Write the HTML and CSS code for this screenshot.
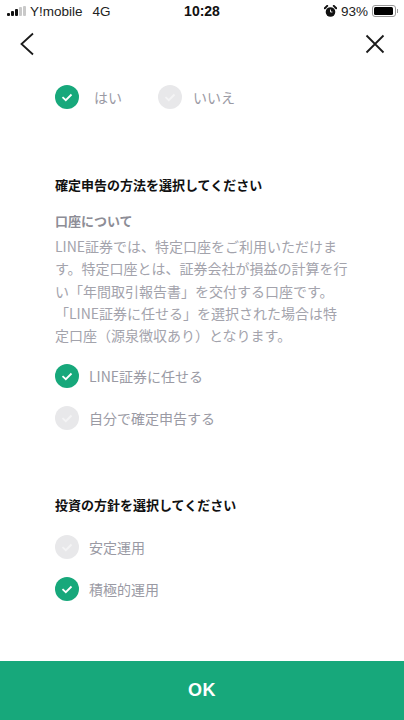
FILE: index.html
```html
<!DOCTYPE html>
<html lang="ja">
<head>
<meta charset="UTF-8" />
<meta name="viewport" content="width=device-width, initial-scale=1" />
<title>確定申告の方法</title>
<link rel="stylesheet" href="styles.css">
</head>
<body>

<div class="status-bar">
  <div class="status-left">
    <span class="signal">
      <i class="on s1"></i><i class="on s2"></i><i class="on s3"></i><i class="s4"></i><i class="s5"></i>
    </span>
    <span>Y!mobile</span>
    <span class="network">4G</span>
  </div>
  <div class="status-time">10:28</div>
  <div class="status-right">
    <svg class="alarm" width="13" height="13" viewBox="0 0 13 13">
      <circle cx="6.5" cy="7" r="4.8" fill="#111"/>
      <path d="M0.8 3.2 L3.2 0.9 M12.2 3.2 L9.8 0.9" stroke="#111" stroke-width="2" stroke-linecap="round"/>
      <path d="M6.5 4.5 V7 H8.4" stroke="#fff" stroke-width="0.9" fill="none"/>
    </svg>
    <span class="battery-text">93%</span>
    <span class="battery"><span class="battery-level"></span></span>
    <span class="battery-tip"></span>
  </div>
</div>

<header class="top-nav">
  <button class="icon-btn" aria-label="戻る">
    <svg width="16" height="24" viewBox="0 0 16 24"><path d="M14 1.5 L2.5 12 L14 22.5" fill="none" stroke="#1a1a1a" stroke-width="1.8"/></svg>
  </button>
  <button class="icon-btn" aria-label="閉じる">
    <svg width="20" height="20" viewBox="0 0 20 20"><path d="M1.5 1.5 L18.5 18.5 M18.5 1.5 L1.5 18.5" fill="none" stroke="#1a1a1a" stroke-width="1.8"/></svg>
  </button>
</header>

<main class="content">
  <div class="choice-inline">
    <div class="choice">
      <span class="check checked"><svg width="24" height="24" viewBox="0 0 24 24"><path d="M7.5 12.2 L10.8 15.2 L16.5 9.5"/></svg></span>
      <span class="choice-label">はい</span>
    </div>
    <div class="choice">
      <span class="check"><svg width="24" height="24" viewBox="0 0 24 24"><path d="M7.5 12.2 L10.8 15.2 L16.5 9.5"/></svg></span>
      <span class="choice-label">いいえ</span>
    </div>
  </div>

  <section class="tax-section">
    <h2>確定申告の方法を選択してください</h2>
    <h3>口座について</h3>
    <p class="note">LINE証券では、特定口座をご利用いただけます。特定口座とは、証券会社が損益の計算を行い「年間取引報告書」を交付する口座です。<br>「LINE証券に任せる」を選択された場合は特定口座（源泉徴収あり）となります。</p>
    <div class="choice-list">
      <div class="choice">
        <span class="check checked"><svg width="24" height="24" viewBox="0 0 24 24"><path d="M7.5 12.2 L10.8 15.2 L16.5 9.5"/></svg></span>
        <span class="choice-label">LINE証券に任せる</span>
      </div>
      <div class="choice">
        <span class="check"><svg width="24" height="24" viewBox="0 0 24 24"><path d="M7.5 12.2 L10.8 15.2 L16.5 9.5"/></svg></span>
        <span class="choice-label">自分で確定申告する</span>
      </div>
    </div>
  </section>

  <section class="policy-section">
    <h2>投資の方針を選択してください</h2>
    <div class="choice-list">
      <div class="choice">
        <span class="check"><svg width="24" height="24" viewBox="0 0 24 24"><path d="M7.5 12.2 L10.8 15.2 L16.5 9.5"/></svg></span>
        <span class="choice-label">安定運用</span>
      </div>
      <div class="choice">
        <span class="check checked"><svg width="24" height="24" viewBox="0 0 24 24"><path d="M7.5 12.2 L10.8 15.2 L16.5 9.5"/></svg></span>
        <span class="choice-label">積極的運用</span>
      </div>
    </div>
  </section>
</main>

<button class="ok-btn">OK</button>

</body>
</html>
```

FILE: styles.css
```css
html, body { height: 100%; }
body {
  margin: 0;
  font-family: "Noto Sans CJK JP", "Liberation Sans", sans-serif;
  background: #fff;
  color: #111;
  display: flex; flex-direction: column;
  height: 720px;
  overflow: hidden;
}
/* Status bar */
.status-bar {
  height: 22px;
  padding: 0 6px 0 7px;
  display: flex; align-items: center; justify-content: space-between;
  font-family: "Liberation Sans", sans-serif;
  font-size: 13.5px;
  color: #222;
  position: relative;
}
.status-left { display: flex; align-items: center; gap: 4px; }
.network { margin-left: 6px; }
.signal { display: flex; align-items: flex-end; gap: 1px; height: 10px; }
.signal i { width: 3px; background: #c9c9c9; border-radius: 1px; }
.signal .on { background: #111; }
.signal .s1 { height: 3px; }
.signal .s2 { height: 5px; }
.signal .s3 { height: 7px; }
.signal .s4 { height: 9px; }
.signal .s5 { height: 10px; }
.status-time {
  position: absolute; left: 0; right: 0; top: 3px;
  text-align: center;
  font-weight: 700; font-size: 14px; color: #111;
}
.status-right { display: flex; align-items: center; gap: 3px; }
.alarm { margin-right: 1px; }
.battery-text { margin-right: 1px; }
.battery {
  width: 20px; height: 8px;
  border: 1px solid #999; border-radius: 3px;
  padding: 1px;
  display: flex;
  box-sizing: content-box;
}
.battery-level { width: 93%; background: #000; border-radius: 1.5px; }
.battery-tip { width: 1px; height: 4px; background: #999; margin-left: -2px; }
/* Top nav */
.top-nav {
  height: 44px;
  padding: 0 19px 0 19px;
  display: flex; align-items: center; justify-content: space-between;
}
.icon-btn {
  background: none; border: none; padding: 0; display: flex;
}
/* Content */
.content { flex: 1; padding: 0 55px; }
.choice-inline { display: flex; gap: 36px; margin-top: 19px; }
.choice { display: flex; align-items: center; gap: 10px; }
.choice-inline .choice { gap: 15px; }
.choice-inline .choice + .choice { gap: 11px; }
.check {
  width: 24px; height: 24px; border-radius: 50%;
  background: #e8e8ea;
  display: block;
}
.check svg { display: block; }
.check path { fill: none; stroke: #f4f4f5; stroke-width: 1.8; }
.check.checked { background: #17a87b; }
.check.checked path { stroke: #fff; }
.choice-label { font-size: 14px; color: #9a9aa4; line-height: 24px; }
h2 { font-size: 13px; font-weight: 700; color: #111; margin: 0; line-height: 20px; }
h3 { font-size: 13px; font-weight: 700; color: #8d8d96; margin: 16px 0 0; line-height: 20px; }
.tax-section { margin-top: 66px; }
.note {
  margin: 4px 0 0;
  font-size: 14px; line-height: 22.25px;
  color: #a3a3ac;
  text-spacing-trim: space-all;
}
.choice-list { display: flex; flex-direction: column; gap: 18px; margin-top: 18px; }
.policy-section { margin-top: 65px; }
.policy-section .choice-list { margin-top: 20px; }
/* OK button */
.ok-btn {
  height: 59px;
  flex-shrink: 0;
  border: none;
  background: #17a87b;
  color: #fff;
  font-family: "Liberation Sans", sans-serif;
  font-weight: 700;
  font-size: 18px;
  letter-spacing: 0.5px;
}
```
